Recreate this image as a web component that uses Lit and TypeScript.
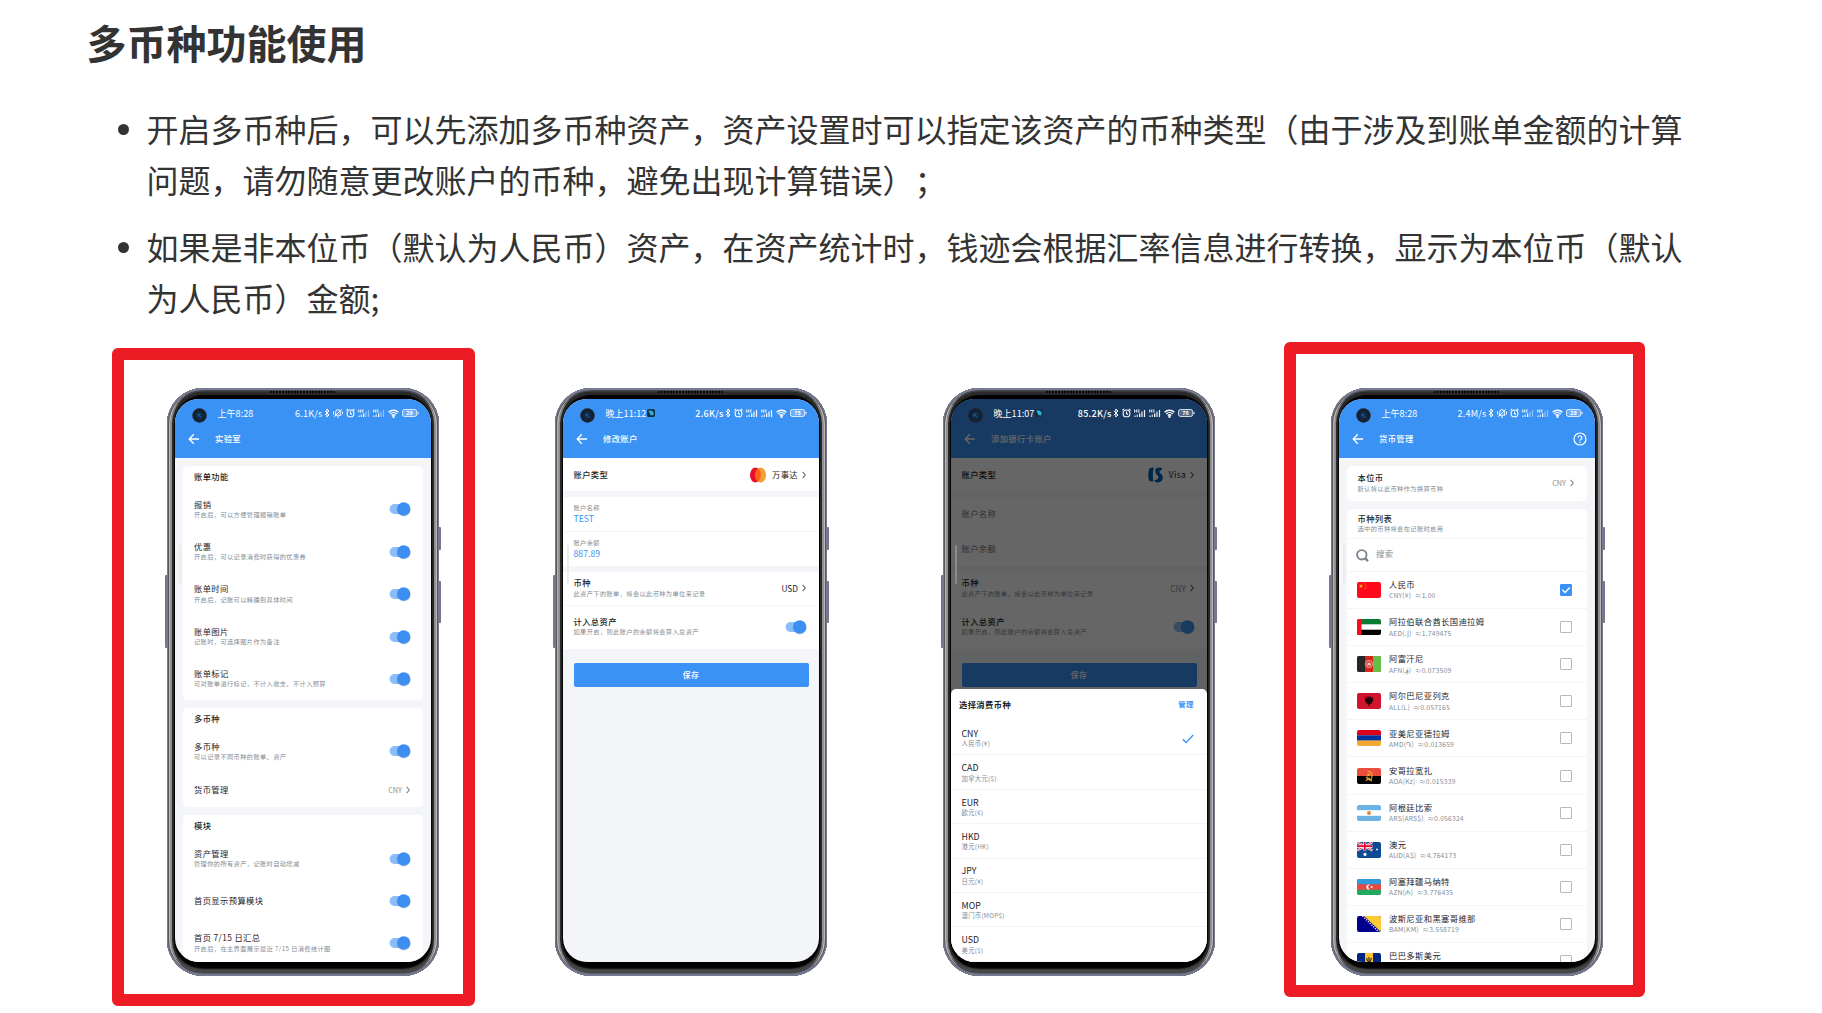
import { LitElement, html, svg, css, nothing, TemplateResult } from "lit";
import { customElement, property } from "lit/decorators.js";
import { classMap } from "lit/directives/class-map.js";

const shared = css`
  * { box-sizing: border-box; }
  svg { display: block; flex: none; }
  .stack { display: flex; flex-direction: column; }
  .t { font-size: 8.3px; letter-spacing: 0.38px; line-height: 10.4px; color: #1f2226; white-space: nowrap; }
  .t.b { font-weight: 500; color: #1d1f22; }
  .d { font-size: 6.2px; letter-spacing: 0.41px; line-height: 10.4px; color: #848c95; white-space: nowrap; }
  .stack .d { padding-top: 0.9px; }
  .blue { color: #3b92f5; }
  .row { display: flex; align-items: center; justify-content: space-between; }
  .value { display: flex; align-items: center; gap: 4px; }
`;

const toggle = html`<svg width="23" height="16" viewBox="0 0 23 16">
  <rect x="1.6" y="3.1" width="18" height="9.8" rx="4.9" fill="#8bbef8" />
  <circle cx="15.7" cy="8.7" r="6.9" fill="#20406a" opacity=".18" />
  <circle cx="15.7" cy="8" r="6.7" fill="#3c8ff0" />
</svg>`;

const chevron = (color: string) => html`<svg width="4" height="8" viewBox="0 0 4 8">
  <path d="M.6.8 3.3 4 .6 7.2" fill="none" stroke=${color} stroke-width="1.1" />
</svg>`;

const backArrow = html`<svg width="12" height="12" viewBox="0 0 12 12">
  <path d="M11 6H1.4M5.8 1.3 1.2 6l4.6 4.7" fill="none" stroke="currentColor" stroke-width="1.3" />
</svg>`;

@customElement("status-bar")
class StatusBar extends LitElement {
  @property() time = "";
  @property() speed = "";
  @property() battery = "";
  @property({ type: Boolean }) muted = false;
  @property({ type: Boolean }) app = false;
  @property({ type: Boolean }) strong = false;

  static styles = [shared, css`
    :host { display: flex; align-items: center; height: 28px; padding: 0 12.5px 0 17px; color: #fff; font-size: 9px; }
    .camera { margin-top: 4.5px; }
    .time { margin-left: 10.5px; white-space: nowrap; letter-spacing: 0.05px; }
    .app { margin-left: 1px; }
    .right { margin-left: auto; display: flex; align-items: center; gap: 3px; }
    .speed { letter-spacing: 0.25px; margin-right: -2px; }
    .strong { font-weight: 500; }
  `];

  private signal() {
    return html`<svg width="12" height="9" viewBox="0 0 12 9" fill="#fff">
      <path d="M0 .6h1v1h1v-1h1v3H2v-1H1v1H0zM3.6.6h2.2v1H4.7v1h1.1v1H3.6zM.3 6.6h1.4V8H.3zM2.6 5.5h1.3V8H2.6z" opacity=".75" />
      <path d="M5 4.5h1.3V8H5z" />
      <path d="M7.4 2.6h1.2V8H7.4zM9.9 1h1.2v7H9.9z" opacity=${this.strong ? 0.95 : 0.45} />
    </svg>`;
  }

  render() {
    return html`
      <svg class="camera" width="15" height="15" viewBox="0 0 15 15">
        <circle cx="7.5" cy="7.5" r="7.2" fill="#17202c" />
        <circle cx="7.5" cy="7.5" r="4.2" fill="#0c2a45" />
        <circle cx="6.8" cy="7" r="1.8" fill="#1c5078" />
        <circle cx="8.8" cy="9" r="1" fill="#17466e" />
      </svg>
      <span class="time">${this.time}</span>
      ${this.app ? html`<svg class="app" width="8" height="8" viewBox="0 0 8 8">
        <rect width="8" height="8" rx="1.8" fill="#123047" /><path d="M1.3 1.6h3.2l2 2v2.6H3.6z" fill="#27b7d6" />
      </svg>` : nothing}
      <div class="right">
        <span class=${classMap({ speed: true, strong: this.strong })}>${this.speed}</span>
        <svg width="6" height="10" viewBox="0 0 6 10">
          <path d="M.8 2.8 5 7 2.9 9V1L5 3 .8 7.2" fill="none" stroke="#fff" stroke-width="1" />
        </svg>
        ${this.muted ? html`<svg width="10" height="10" viewBox="0 0 10 10" fill="none" stroke="#fff" stroke-width="1">
          <path d="M2 7.200h6L7.300 5.600V4A2.300 2.300 0 0 0 2.700 4v1.600zM4 9h2M1.200 8.800 8.800 1.200M.6 3.500v3M9.400 3.500v3" />
        </svg>` : nothing}
        <svg width="9" height="10" viewBox="0 0 9 10" fill="none" stroke="#fff" stroke-width="1.1">
          <circle cx="4.500" cy="5.400" r="3.400" /><path d="M4.500 3.400v2.200l1.400.8M.4 2.400 2.200.9M8.600 2.400 6.800.9" />
        </svg>
        ${this.signal()}${this.signal()}
        <svg width="11" height="9" viewBox="0 0 11 9" fill="none" stroke="#fff" stroke-width="1.400">
          <path d="M.6 3.300a7 7 0 0 1 9.800 0M2.200 5a4.700 4.700 0 0 1 6.600 0M3.800 6.600a2.500 2.500 0 0 1 3.400 0" />
          <circle cx="5.500" cy="7.800" r=".5" fill="#fff" />
        </svg>
        <svg width="17" height="8" viewBox="0 0 17 8">
          <rect x=".5" y=".5" width="14.200" height="7" rx="2" fill="#fff" fill-opacity=".25" stroke="#fff" stroke-width=".8" />
          <path d="M16 2.800v2.400" stroke="#fff" />
          <text x="7.600" y="6" text-anchor="middle" font-size="5.500" font-weight="700" fill="#fff">${this.battery}</text>
        </svg>
      </div>`;
  }
}

@customElement("phone-frame")
class PhoneFrame extends LitElement {
  @property({ type: Boolean }) dim = false;

  static styles = css`
    * { box-sizing: border-box; }
    :host { display: block; position: relative; width: 272px; height: 588px; flex: none; }
    .key { position: absolute; width: 3px; background: #73768f; border-radius: 1px; }
    .k1 { left: -2px; top: 187px; height: 73px; }
    .k2 { right: -2px; top: 139px; height: 23px; }
    .k3 { right: -2px; top: 193px; height: 42px; }
    .body {
      position: relative; width: 272px; height: 588px; border-radius: 36px; padding: 11px 8px 14px;
      background: #000;
      box-shadow: inset 0 0 0 1px #777a90, inset 0 2px 0 0 #7b7e98, inset 0 -2.500px 0 0 #74768f,
        inset 0 0 0 2px #55565c, inset 3.500px 0 0 0 #b9b9b7, inset -3.500px 0 0 0 #b9b9b7,
        inset 0 0 0 3.500px #48494c, inset 5px 0 0 0 #8d8d8b, inset -5px 0 0 0 #8d8d8b,
        inset 0 -7px 2px 0 #484848, inset 0 0 1px 7px #2a2a2a;
    }
    .speaker { position: absolute; left: 103px; top: 2.500px; width: 65px; height: 2.500px; border-radius: 1px;
      background: repeating-linear-gradient(90deg, #08080a 0 2px, #34353c 2px 3px); }
    .screen { width: 256px; height: 563px; border-radius: 24px; overflow: hidden; background: #f3f5f8; position: relative; }
    .handle { position: absolute; left: 4px; top: 146px; width: 2px; height: 39px; border-radius: 1px; background: #ebecee; }
    .handle.dim { background: #8b8b8b; }
  `;

  render() {
    return html`
      <i class="key k1"></i><i class="key k2"></i><i class="key k3"></i>
      <div class="body">
        <div class="speaker"></div>
        <div class="screen"><slot></slot><div class=${classMap({ handle: true, dim: this.dim })}></div></div>
      </div>`;
  }
}

const appBar = css`
  .head { height: 59px; background: #3b92f5; color: #fff; }
  .bar { display: flex; align-items: center; height: 23px; padding: 0 8px 0 13px; }
  .bar .title { margin-left: 15px; font-size: 8.300px; letter-spacing: 0.380px; font-weight: 500; line-height: 11px; padding-bottom: 1px; flex: 1; }
  .card { background: #fff; border-radius: 5px; margin: 0 8px 8px; }
`;

interface Setting { title: string; desc?: string; value?: string; }

@customElement("lab-screen")
class LabScreen extends LitElement {
  static styles = [shared, appBar, css`
    :host { display: block; }
    .body { padding-top: 8px; }
    .card { padding: 0 11px; }
    .title-row { height: 22.300px; padding-top: 5px; }
    .row { height: 42.350px; }
    .row.single { height: 34.500px; }
    .stack.solo { padding-bottom: 1.500px; }
    .toggle { margin-right: 0.800px; }
    .value { padding-right: 2px; }
    .value .d { font-size: 7.300px; letter-spacing: 0; }
  `];

  private groups: { name: string; items: Setting[] }[] = [
    { name: "账单功能", items: [
      { title: "报销", desc: "开启后，可以方便管理报销账单" },
      { title: "优惠", desc: "开启后，可以记录消费时获得的优惠券" },
      { title: "账单时间", desc: "开启后，记账可以精确到具体时间" },
      { title: "账单图片", desc: "记账时，可选择图片作为备注" },
      { title: "账单标记", desc: "可对账单进行标记，不计入收支、不计入预算" },
    ] },
    { name: "多币种", items: [
      { title: "多币种", desc: "可以记录不同币种的账单、资产" },
      { title: "货币管理", value: "CNY" },
    ] },
    { name: "模块", items: [
      { title: "资产管理", desc: "管理你的所有资产，记账时自动增减" },
      { title: "首页显示预算模块" },
      { title: "首页 7/15 日汇总", desc: "开启后，在主界面展示最近 7/15 日消费统计图" },
    ] },
  ];

  render() {
    return html`
      <div class="head">
        <status-bar time="上午8:28" speed="6.1K/s" battery="29" muted></status-bar>
        <div class="bar">${backArrow}<span class="title">实验室</span></div>
      </div>
      <div class="body">
        ${this.groups.map((g) => html`<section class="card">
          <div class="title-row t b">${g.name}</div>
          ${g.items.map((i) => html`<div class=${classMap({ row: true, single: !!i.value })}>
            <div class=${classMap({ stack: true, solo: !i.desc })}><span class="t">${i.title}</span>${i.desc ? html`<span class="d">${i.desc}</span>` : nothing}</div>
            ${i.value
              ? html`<div class="value"><span class="d">${i.value}</span>${chevron("#7d858e")}</div>`
              : html`<div class="toggle">${toggle}</div>`}
          </div>`)}
        </section>`)}
      </div>`;
  }
}

@customElement("account-screen")
class AccountScreen extends LitElement {
  @property({ type: Boolean }) adding = false;

  static styles = [shared, appBar, css`
    :host { display: block; position: relative; height: 563px; }
    .row { background: #fff; padding: 0 13px 0 10.500px; }
    .type { height: 33px; }
    .field { height: 34.500px; }
    .field .d { color: #85898e; padding-top: 0; }
    .field .t { font-size: 8.700px; letter-spacing: 0; line-height: 11.500px; }
    .field.empty .t { color: #777; font-size: 8.300px; letter-spacing: .380px; }
    .gap { height: 6px; }
    .line { border-bottom: 1px solid #f4f5f7; }
    .cur { height: 33.500px; }
    .total { height: 43px; padding-right: 12px; }
    .type .value { gap: 4px; }
    .type .value svg:first-child { margin-right: 2px; }
    .cur .t { letter-spacing: 0; }
    .cur .stack .t { letter-spacing: .380px; font-weight: 500; }
    .muted .value .t { color: #8b939c; }
    .save { margin: 14px 10.500px 0; height: 24px; border-radius: 2px; background: #3b92f5; color: #fff; padding-bottom: 1px;
      display: flex; align-items: center; justify-content: center; font-size: 7.800px; font-weight: 500; letter-spacing: .4px; }
    .veil { position: absolute; inset: 0; background: rgba(0, 0, 0, 0.6); }
    .sheet { position: absolute; left: 0; right: 0; bottom: 0; height: 273.500px; background: #fff; border-radius: 5px 5px 0 0; overflow: hidden; }
    .top { position: absolute; left: 0; right: 0; top: 0; height: 28px; background: #183a62; }
    .head-space { height: 28px; }
    .sheet-head { height: 32.500px; padding: 0 13.500px 0 8px; background: none; }
    .sheet-head .t { font-weight: 600; padding-bottom: 1px; }
    .sheet-head .blue { font-size: 7.400px; letter-spacing: .2px; color: #3b92f5; }
    .opt { height: 34.400px; border-bottom: 1px solid #f3f4f5; }
    .opt .stack, .opt svg { position: relative; top: 1.500px; }
    .opt .t { font-size: 8.800px; letter-spacing: 0; }
    .opt .d { letter-spacing: .25px; font-size: 6.400px; padding-top: 0; }
  `];

  private options = [
    ["CNY", "人民币(¥)"], ["CAD", "加拿大元($)"], ["EUR", "欧元(€)"], ["HKD", "港元(HK)"],
    ["JPY", "日元(¥)"], ["MOP", "澳门币(MOP$)"], ["USD", "美元($)"],
  ];

  private status() {
    return this.adding
      ? html`<status-bar time="晚上11:07" speed="85.2K/s" battery="76" app strong></status-bar>`
      : html`<status-bar time="晚上11:12" speed="2.6K/s" battery="75" app strong></status-bar>`;
  }

  private brand() {
    return this.adding
      ? html`<svg width="15" height="16" viewBox="0 0 15 16" fill="#0064b0">
          <path d="M1.500 1.500Q3.500.2 5.800.6 4.200 5.500 5.200 14.800L1.200 14Q-.8 7 1.500 1.500z" />
          <path d="M14.400 1.200Q8-.8 7.200 3.600 7 6.600 9.400 8.300 11.400 10 9.600 12.300 8.500 13.200 5.800 13 7 15.800 10.500 15.400 15.200 14.400 14.800 9.900 14.600 7.600 12 5.900 10.200 4.300 12.600 3.800z" />
        </svg>`
      : html`<svg width="16" height="16" viewBox="0 0 16 16">
          <ellipse cx="5.400" cy="8" rx="5.400" ry="7.600" fill="#eb0f2a" />
          <ellipse cx="10.600" cy="8" rx="5.400" ry="7.600" fill="#f79e35" />
          <path d="M8 1.400Q10.800 3.600 10.800 8T8 14.600Q5.200 12.400 5.200 8T8 1.400z" fill="#ff5f1a" />
        </svg>`;
  }

  private field(label: string, value: string) {
    return this.adding
      ? html`<div class="stack"><span class="t">${label}</span></div>`
      : html`<div class="stack"><span class="d">${label}</span><span class="t blue">${value}</span></div>`;
  }

  render() {
    const empty = this.adding;
    return html`
      <div class="head">
        ${this.adding ? html`<div class="head-space"></div>` : this.status()}
        <div class="bar">${backArrow}<span class="title">${this.adding ? "添加银行卡账户" : "修改账户"}</span></div>
      </div>
      <div class="row type"><span class="t b">账户类型</span>
        <div class="value">${this.brand()}<span class="t">${this.adding ? "Visa" : "万事达"}</span>${chevron("#60666c")}</div></div>
      <div class="gap"></div>
      <div class=${classMap({ row: true, field: true, line: true, empty })}>${this.field("账户名称", "TEST")}</div>
      <div class=${classMap({ row: true, field: true, empty })}>${this.field("账户余额", "887.89")}</div>
      <div class="gap"></div>
      <div class=${classMap({ row: true, cur: true, line: true, muted: this.adding })}>
        <div class="stack"><span class="t">币种</span><span class="d">此资产下的账单，将会以此币种为单位来记录</span></div>
        <div class="value"><span class="t">${this.adding ? "CNY" : "USD"}</span>${chevron("#60666c")}</div>
      </div>
      <div class="row total">
        <div class="stack"><span class="t b">计入总资产</span><span class="d">如果开启，则此账户的余额将会算入总资产</span></div>
        ${toggle}
      </div>
      <div class="save">保存</div>
      ${this.adding ? html`
        <div class="veil"></div>
        <div class="top">${this.status()}</div>
        <div class="sheet">
          <div class="row sheet-head"><span class="t b">选择消费币种</span><span class="t blue">管理</span></div>
          ${this.options.map(([code, name], i) => html`<div class="row opt">
            <div class="stack"><span class="t">${code}</span><span class="d">${name}</span></div>
            ${i === 0 ? html`<svg width="12" height="10" viewBox="0 0 12 10">
              <path d="M.8 5.200 4.200 8.600 11.200 1" fill="none" stroke="#3b92f5" stroke-width="1.400" /></svg>` : nothing}
          </div>`)}
        </div>` : nothing}`;
  }
}

const flags: Record<string, TemplateResult | ReturnType<typeof svg>> = {
  cn: svg`<rect width="24" height="16" fill="#ff0a1c"/><path d="m4 2 .6 1.500h1.600L4.900 4.500l.5 1.500L4 5.100 2.600 6l.5-1.500L1.800 3.500h1.600z" fill="#ffd200"/><circle cx="7.800" cy="1.800" r=".5" fill="#ffb000"/><circle cx="9" cy="3.200" r=".5" fill="#ffb000"/><circle cx="9" cy="5.200" r=".5" fill="#ffb000"/><circle cx="7.800" cy="6.700" r=".5" fill="#ffb000"/>`,
  ae: svg`<rect width="24" height="16" fill="#fff"/><rect width="24" height="5.300" fill="#0b7a32"/><rect y="10.700" width="24" height="5.300"/><rect width="4.500" height="16" fill="#ff0a1c"/>`,
  af: svg`<rect width="24" height="16" fill="#d7261e"/><rect width="8" height="16" fill="#262626"/><rect x="16" width="8" height="16" fill="#63bf48"/><circle cx="12" cy="8" r="3.500" fill="none" stroke="#fff" stroke-opacity=".75" stroke-width=".8"/><path d="M10.200 9.500V7.500L12 6.300l1.800 1.200v2z" fill="#fff" opacity=".75"/>`,
  al: svg`<rect width="24" height="16" fill="#d0142d"/><path d="M12 4.500 10.800 3l-1 1 1 .8-.6.8L8 3.800 8.200 9l1.500.2L9 11l1.600-.4L12 13.500l1.400-2.900L15 11l-.7-1.800 1.500-.2.200-5.200-2.200 1.800-.6-.8 1-.8-1-1z" fill="#200408"/>`,
  am: svg`<rect width="24" height="5.400" fill="#d9001b"/><rect y="5.300" width="24" height="5.400" fill="#0033a0"/><rect y="10.600" width="24" height="5.400" fill="#f2a832"/>`,
  ao: svg`<rect width="24" height="8" fill="#eb4d3d"/><rect y="8" width="24" height="8"/><path d="M10.500 3.500Q15 3 15 8q0 3.500-3 4.300M9 9l6 4M8.800 12.500 12.500 10" fill="none" stroke="#f0b32a" stroke-width="1.100"/><path d="m11.500 5 .6 1.300 1.400.1-1 1 .2 1.300-1.200-.7-1.200.7.2-1.300-1-1 1.400-.1z" fill="#f0b32a"/>`,
  ar: svg`<rect width="24" height="16" fill="#fff"/><rect width="24" height="5.200" fill="#6cb2e4"/><rect y="10.800" width="24" height="5.200" fill="#6cb2e4"/><circle cx="12" cy="8" r="2" fill="#e08a2c"/>`,
  au: svg`<rect width="24" height="16" fill="#0c4a94"/><path d="M0 0 15.500 8.500M15.500 0 0 8.500" stroke="#fff" stroke-width="2"/><path d="M0 0 15.500 8.500M15.500 0 0 8.500" stroke="#e4002b" stroke-width=".8"/><path d="M7.800 0v8.500M0 4.200h15.500" stroke="#fff" stroke-width="3"/><path d="M7.800 0v8.500M0 4.200h15.500" stroke="#e4002b" stroke-width="1.700"/><path d="m8 10.200.7 1.300 1.500.2-1.100 1 .3 1.500L8 13.500l-1.400.7.3-1.500-1.100-1 1.500-.2z" fill="#fff"/><circle cx="20" cy="7.500" r=".9" fill="#fff"/>`,
  az: svg`<rect width="24" height="16" fill="#e8483f"/><rect width="24" height="5.300" fill="#309adb"/><rect y="10.700" width="24" height="5.300" fill="#21a861"/><path d="M13.200 5.900a2.500 2.500 0 1 0 0 4.200 2.100 2.100 0 1 1 0-4.200z" fill="#fff"/><circle cx="14.600" cy="8" r="1" fill="#fff"/>`,
  ba: svg`<rect width="24" height="16" fill="#00008f"/><path d="M7 0h17v16z" fill="#fecb37"/><path d="M5.500 0 22 16" stroke="#fff" stroke-width="1.400" stroke-dasharray="1.200 1.300"/>`,
  bb: svg`<rect width="24" height="16" fill="#00267f"/><rect x="8" width="8" height="16" fill="#ffc233"/><path d="M12 4v8M9.700 5q0 4 2.300 4t2.300-4" fill="none" stroke="#111" stroke-width="1"/>`,
};

@customElement("currency-screen")
class CurrencyScreen extends LitElement {
  static styles = [shared, appBar, css`
    :host { display: block; }
    .body { padding-top: 8px; }
    .base { height: 34.500px; padding: 0 13px 0 10.500px; }
    .value .d { font-size: 7.300px; letter-spacing: 0; }
    .intro { height: 30.500px; padding: 4.500px 10.500px 0; border-bottom: 1px solid #f4f5f7; }
    .search { height: 33px; display: flex; align-items: center; gap: 7px; padding: 0 9px; border-bottom: 1px solid #f4f5f7; }
    .search .t { color: #858b92; padding-bottom: 4px; }
    .cur { height: 37.100px; padding: 0 15px 0 10px; border-bottom: 1px solid #f4f5f7; gap: 8px; }
    .cur .stack { flex: 1; }
    .cur .d { letter-spacing: .2px; font-size: 6.750px; white-space: pre; }
    .flag { border-radius: 2px; overflow: hidden; }
    .box { width: 12px; height: 12px; border: 1px solid #b4b9be; border-radius: 1px; }
    .box.on { background: #3b92f5; border-color: #3b92f5; }
  `];

  private rows = [
    ["cn", "人民币", "CNY(¥)  ≈1.00"],
    ["ae", "阿拉伯联合酋长国迪拉姆", "AED(.إ)  ≈1.749475"],
    ["af", "阿富汗尼", "AFN(؋)  ≈0.073509"],
    ["al", "阿尔巴尼亚列克", "ALL(L)  ≈0.057165"],
    ["am", "亚美尼亚德拉姆", "AMD(֏)  ≈0.013659"],
    ["ao", "安哥拉宽扎", "AOA(Kz)  ≈0.015339"],
    ["ar", "阿根廷比索", "ARS(ARS$)  ≈0.056324"],
    ["au", "澳元", "AUD(A$)  ≈4.764173"],
    ["az", "阿塞拜疆马纳特", "AZN(₼)  ≈3.776435"],
    ["ba", "波斯尼亚和黑塞哥维那", "BAM(KM)  ≈3.558719"],
    ["bb", "巴巴多斯美元", ""],
  ];

  render() {
    return html`
      <div class="head">
        <status-bar time="上午8:28" speed="2.4M/s" battery="29" muted></status-bar>
        <div class="bar">${backArrow}<span class="title">货币管理</span>
          <svg width="14" height="14" viewBox="0 0 14 14" fill="none" stroke="#fff" stroke-width="1.200">
            <circle cx="7" cy="7" r="6" /><path d="M5.100 5.700a1.900 1.900 0 1 1 2.900 1.600Q7 7.900 7 8.800M7 9.700v1.200" />
          </svg>
        </div>
      </div>
      <div class="body">
        <section class="card row base">
          <div class="stack"><span class="t b">本位币</span><span class="d">默认将以此币种作为换算币种</span></div>
          <div class="value"><span class="d">CNY</span>${chevron("#7d858e")}</div>
        </section>
        <section class="card">
          <div class="stack intro"><span class="t b">币种列表</span><span class="d">选中的币种将会在记账时启用</span></div>
          <div class="search">
            <svg width="13" height="13" viewBox="0 0 13 13" fill="none" stroke="#7b848d">
              <circle cx="5.800" cy="5.800" r="4.700" stroke-width="1.800" /><path d="m9 9.200 3 3" stroke-width="2.400" />
            </svg>
            <span class="t">搜索</span>
          </div>
          ${this.rows.map(([flag, name, rate], i) => html`<div class="row cur">
            <svg class="flag" width="24" height="16" viewBox="0 0 24 16">${flags[flag]}</svg>
            <div class="stack"><span class="t">${name}</span><span class="d"><bdo dir="ltr">${rate || "\u00a0"}</bdo></span></div>
            <div class=${classMap({ box: true, on: i === 0 })}>${i === 0 ? html`<svg width="10" height="10" viewBox="0 0 10 10">
              <path d="m1.300 4.800 2.700 2.700 4.800-5" fill="none" stroke="#fff" stroke-width="1.400" /></svg>` : nothing}</div>
          </div>`)}
        </section>
      </div>`;
  }
}

@customElement("app-root")
class AppRoot extends LitElement {
  static styles = css`
    * { box-sizing: border-box; }
    :host {
      display: block; width: 1822px; height: 1013px; overflow: hidden; background: #fff; color: #333;
      font-family: "Noto Sans CJK SC", "Noto Sans", sans-serif; text-spacing-trim: space-all;
    }
    h2 { margin: 0; padding: 16px 0 0 86.500px; font-size: 40px; line-height: 52px; font-weight: 700; }
    ul { list-style: none; margin: 35px 0 0; padding: 0 0 0 118px; display: flex; flex-direction: column; gap: 16px; }
    li { display: flex; width: 1572px; font-size: 32px; line-height: 51px; }
    .dot { flex: none; width: 11px; height: 11px; border-radius: 50%; background: #333; margin: 20.500px 17.500px 0 0; }
    .gallery { display: flex; gap: 116px; padding: 65px 0 0 167px; }
    .shot { position: relative; flex: none; }
    .mark { position: absolute; border: 12px solid #ed1c24; border-radius: 6px; }
    .mark.a { left: -55px; top: -40px; width: 363px; height: 658px; }
    .mark.b { left: -47px; top: -46px; width: 361px; height: 655px; }
  `;

  render() {
    return html`
      <h2>多币种功能使用</h2>
      <ul>
        <li><i class="dot"></i><span>开启多币种后，可以先添加多币种资产，资产设置时可以指定该资产的币种类型（由于涉及到账单金额的计算问题，请勿随意更改账户的币种，避免出现计算错误）；</span></li>
        <li><i class="dot"></i><span>如果是非本位币（默认为人民币）资产，在资产统计时，钱迹会根据汇率信息进行转换，显示为本位币（默认为人民币）金额;</span></li>
      </ul>
      <div class="gallery">
        <div class="shot"><phone-frame><lab-screen></lab-screen></phone-frame><div class="mark a"></div></div>
        <div class="shot"><phone-frame><account-screen></account-screen></phone-frame></div>
        <div class="shot"><phone-frame dim><account-screen adding></account-screen></phone-frame></div>
        <div class="shot"><phone-frame><currency-screen></currency-screen></phone-frame><div class="mark b"></div></div>
      </div>`;
  }
}
